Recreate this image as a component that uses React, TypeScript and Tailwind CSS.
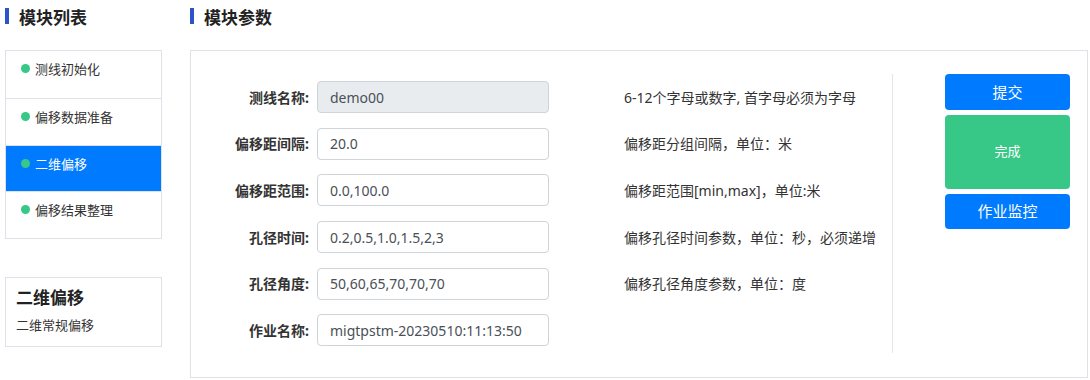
import React from 'react';

const modules = ['测线初始化', '偏移数据准备', '二维偏移', '偏移结果整理'];

const fields = [
    { label: '测线名称:', value: 'demo00', hint: '6-12个字母或数字, 首字母必须为字母', disabled: true },
    { label: '偏移距间隔:', value: '20.0', hint: '偏移距分组间隔，单位：米' },
    { label: '偏移距范围:', value: '0.0,100.0', hint: '偏移距范围[min,max]，单位:米' },
    { label: '孔径时间:', value: '0.2,0.5,1.0,1.5,2,3', hint: '偏移孔径时间参数，单位：秒，必须递增' },
    { label: '孔径角度:', value: '50,60,65,70,70,70', hint: '偏移孔径角度参数，单位：度' },
    { label: '作业名称:', value: 'migtpstm-20230510:11:13:50', hint: '' },
];

const SectionTitle: React.FC<{ title: string }> = ({ title }) => (
    <div className="mt-[8px] h-[16px] flex items-start">
        <div className="w-[4px] h-[16px] bg-[#2b55c7]" />
        <h2 className="ml-[10px] mt-[1px] text-[17px] leading-[18px] font-bold text-[#222]">{title}</h2>
    </div>
);

export default function App() {
    const active = 2;

    return (
        <div
            className="w-[1090px] h-[380px] bg-white flex text-[#333]"
            style={{ fontFamily: '"Noto Sans", "Noto Sans CJK SC", sans-serif' }}
        >
            {/* --- LEFT: module list --- */}
            <div className="ml-[5px] w-[157px] flex flex-col">
                <SectionTitle title="模块列表" />

                <div className="mt-[26px] border border-[#dfe1e8] bg-white">
                    {modules.map((m, i) => (
                        <div
                            key={m}
                            className={`h-[46.75px] pl-[15px] pt-[10px] flex items-start gap-[5px] ${i > 0 ? 'border-t border-[#dfe1e8]' : ''} ${i === active ? 'bg-[#007bff] text-white' : 'bg-white text-[#333]'}`}
                        >
                            <span className="mt-[3px] w-[9px] h-[9px] rounded-full bg-[#37c786]" />
                            <span className="text-[13px] leading-[16px]">{m}</span>
                        </div>
                    ))}
                </div>

                <div className="mt-[38px] h-[70px] border border-[#dfe1e8] px-[10px] pt-[10px]">
                    <div className="text-[17px] leading-[20px] font-bold text-[#222]">二维偏移</div>
                    <div className="mt-[9px] text-[13px] leading-[16px] text-[#333]">二维常规偏移</div>
                </div>
            </div>

            {/* --- RIGHT: parameters --- */}
            <div className="ml-[28px] w-[898px] flex flex-col">
                <SectionTitle title="模块参数" />

                <div className="mt-[26px] h-[328px] border border-[#dfe1e8] pt-[23px] flex items-start">
                    <div className="w-[701px] flex flex-col">
                        {fields.map(f => (
                            <div key={f.label} className="h-[46.6px] flex items-center">
                                <label className="w-[118px] text-right text-[14px] font-bold text-[#333]">{f.label}</label>
                                <input
                                    readOnly
                                    value={f.value}
                                    className={`ml-[8px] w-[232px] h-[32px] px-[12px] text-[14px] text-[#495057] border border-[#ced4da] rounded-[4px] outline-none ${f.disabled ? 'bg-[#e9ecef]' : 'bg-white'}`}
                                />
                                <span className="ml-[75px] text-[14px] text-[#333] whitespace-nowrap">{f.hint}</span>
                            </div>
                        ))}
                    </div>

                    <div className="w-px h-[279px] bg-[#e3e5ea]" />

                    <div className="ml-[52px] w-[125px] flex flex-col gap-[5px]">
                        <button className="h-[36px] rounded-[4px] bg-[#007bff] text-white text-[15px]">提交</button>
                        <button className="h-[74px] rounded-[4px] bg-[#37c786] text-white text-[13px]">完成</button>
                        <button className="h-[35px] rounded-[4px] bg-[#007bff] text-white text-[15px]">作业监控</button>
                    </div>
                </div>
            </div>
        </div>
    );
}
